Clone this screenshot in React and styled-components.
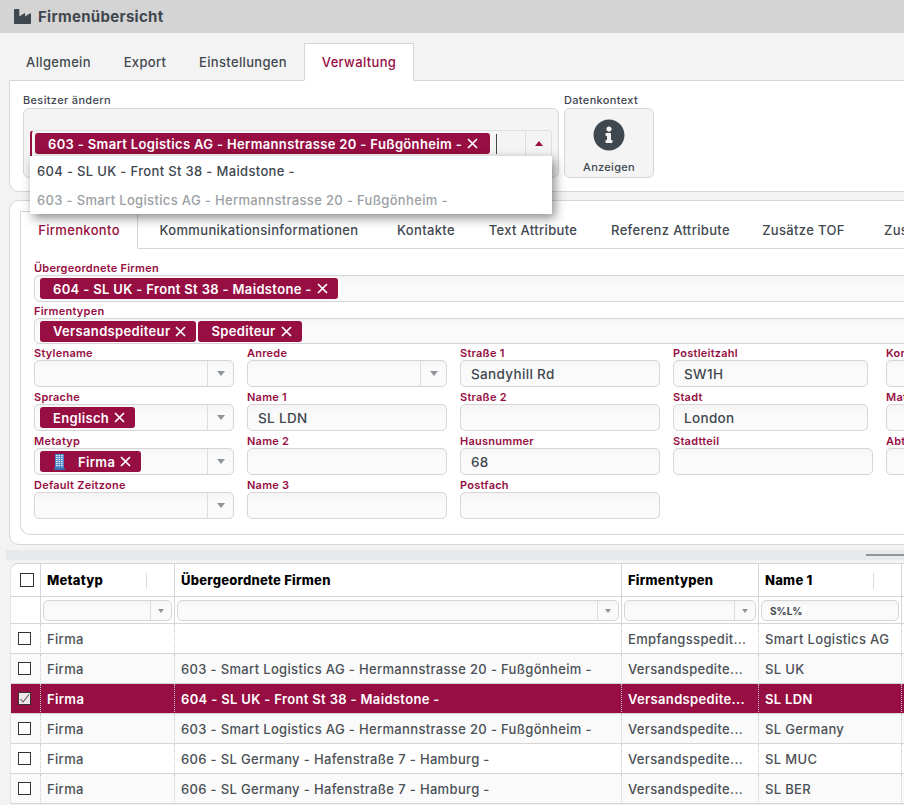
import React from "react";
import styled, { createGlobalStyle } from "styled-components";
import { FaIndustry, FaInfoCircle } from "react-icons/fa";

const CRIMSON = "#970e43";
const INK = "#3f474f";
const LINE = "#d6d6d6";

const Global = createGlobalStyle`
  html, body { margin: 0; padding: 0; background: #f3f3f3; }
  body { width: 904px; height: 805px; overflow: hidden; font-family: Inter, "Noto Sans", sans-serif; font-size: 13px; font-weight: 500; color: ${INK}; letter-spacing: .34px; }
  * { box-sizing: border-box; }
`;

const Page = styled.div`width: 904px; height: 805px; overflow: hidden;`;
const Header = styled.header`
  height: 33px; background: #d4d4d4; display: flex; align-items: center; padding-left: 14px; gap: 7px;
  font-size: 15px; font-weight: 700; letter-spacing: .3px; color: ${INK};
`;
const TabBar = styled.div`
  display: flex; height: ${p => p.$h}px; position: relative; z-index: 1; white-space: nowrap;
`;
const MainTabBar = styled(TabBar)`margin: 10px 0 -1px 9px;`;
const Tab = styled.div`
  width: ${p => p.$w}px; flex: none; display: flex; align-items: center; justify-content: center;
  border: 1px solid ${p => (p.$active ? LINE : "transparent")};
  border-bottom-color: ${p => (p.$active ? "#fff" : "transparent")};
  background: ${p => (p.$active ? "#fff" : "transparent")};
  color: ${p => (p.$active ? CRIMSON : INK)};
`;
const TopPanel = styled.section`
  margin: 0 -20px 0 9px; height: 112px; background: #fff; border: 1px solid ${LINE}; border-radius: 0 0 0 10px;
  padding: 12px 13px; display: flex; gap: 5px;
`;
const FieldColumn = styled.div`display: flex; flex-direction: column;`;
const TopLabel = styled.label`font-size: 11px; line-height: 15px; height: 15px; color: ${INK};`;
const OwnerBox = styled.div`
  width: 536px; height: 70px; background: #f4f4f4; border: 1px solid ${LINE}; border-radius: 6px; padding: 21px 6px; position: relative;
`;
const OwnerSelect = styled.div`
  height: 27px; border: 1px solid #e0e0e0; border-left: 2px solid ${CRIMSON}; border-radius: 4px 4px 0 0; display: flex; align-items: center; padding-left: 3px; background: #f4f4f4;
`;
const Cursor = styled.span`width: 1px; height: 20px; background: ${INK}; margin-left: 6px;`;
const SelectArrow = styled.div`
  margin-left: auto; width: 26px; align-self: stretch; border-left: 1px solid #dcdcdc; display: flex; align-items: center; justify-content: center;
`;
const CaretUp = styled.span`width: 0; height: 0; border: 4.5px solid transparent; border-top: 0; border-bottom: 5px solid ${CRIMSON};`;
const Dropdown = styled.div`
  position: absolute; left: 6px; top: 47px; width: 522px; height: 58px; background: #fff; z-index: 5;
  box-shadow: 3px 4px 10px rgba(0,0,0,.45); padding-top: 1px;
`;
const DropItem = styled.div`height: 29px; line-height: 28px; padding-left: 7px; white-space: nowrap; color: ${p => (p.$muted ? "#9a9fa4" : INK)};`;
const ContextButton = styled.button`
  width: 90px; height: 70px; background: #f4f4f4; border: 1px solid ${LINE}; border-radius: 6px; display: flex; flex-direction: column; align-items: center;
  padding: 10px 0 0; gap: 9px; font: inherit; font-size: 11px; letter-spacing: .3px; color: ${INK};
`;
const CompanyPanel = styled.section`
  margin: 8px -20px 0 9px; height: 345px; background: #fff; border: 1px solid ${LINE}; border-radius: 10px 0 0 10px; padding: 10px 0 0 10px;
`;
const InnerTabBar = styled(TabBar)`margin-bottom: -1px;`;
const InnerPanel = styled.div`
  height: 287px; border: 1px solid ${LINE}; border-right: 0; border-radius: 0 0 0 10px; padding: 12px 0 0 13px;
`;
const FieldLabel = styled.label`
  display: block; font-size: 11px; line-height: 14px; height: 14px; color: ${CRIMSON}; font-weight: 600; letter-spacing: .25px; white-space: nowrap;
`;
const Wide = styled.div`
  width: 900px; height: ${p => p.$h}px; margin-bottom: 2px; border: 1px solid ${LINE}; border-radius: 5px; background: linear-gradient(#f4f4f4, #fafafa 30%);
  display: flex; align-items: center; gap: 2px; padding-left: 5px;
`;
const Columns = styled.div`display: flex; gap: 13px; margin-top: 2px;`;
const Column = styled.div`display: flex; flex-direction: column; width: ${p => p.$w}px; flex: none;`;
const Field = styled.div`height: 44px; width: ${p => p.$w ? p.$w + "px" : "100%"};`;
const InputBox = styled.div`
  height: 27px; border: 1px solid ${LINE}; border-radius: 5px; background: linear-gradient(#f4f4f4, #fafafa 30%);
  display: flex; align-items: center; padding-left: ${p => (p.$tag ? 5 : 10)}px; font-size: 13.5px; overflow: hidden;
`;
const SelectSide = styled.div`
  margin-left: auto; width: 26px; flex: none; align-self: stretch; border-left: 1px solid #dcdcdc; display: flex; align-items: center; justify-content: center;
`;
const CaretDown = styled.span`width: 0; height: 0; border: 4.5px solid transparent; border-bottom: 0; border-top: 5px solid #8e9499;`;
const Tag = styled.span`
  height: 21px; flex: none; background: ${CRIMSON}; color: #fff; border-radius: 3px; display: inline-flex; align-items: center; font-size: 13px; font-weight: 600; letter-spacing: ${p => p.$ls || ".34px"};
  padding: 0 ${p => p.$pr || 10}px 0 13px; gap: 5px; white-space: nowrap; width: ${p => p.$w ? p.$w + "px" : "auto"};
`;
const Splitter = styled.div`margin: 5px 0 0 6px; height: 10px; background: #e8e9ea; position: relative;`;
const SplitHandle = styled.span`position: absolute; right: 0; top: 4px; width: 38px; height: 2px; background: #8f979b;`;
const Table = styled.table`
  margin: 3px 0 0 10px; width: 1000px; table-layout: fixed; border-collapse: separate; border-spacing: 0; background: #fff; border-top: 1px solid ${LINE}; border-radius: 8px 0 0 0;
  border-left: 1px solid #e4e4e4;
`;
const Th = styled.th`
  height: 33px; padding: 0 0 0 6px; border-bottom: 1px solid ${LINE}; border-left: ${p => (p.$first ? "0" : `1px solid ${LINE}`)}; text-align: left; color: #000; font-size: 13px; font-weight: 800; letter-spacing: .25px; position: relative; white-space: nowrap;
`;
const Resizer = styled.span`position: absolute; right: ${p => p.$r}px; top: 9px; height: 16px; width: 1px; background: #dcdcdc;`;
const FilterCell = styled.td`
  height: 27px; padding: 3px 2px 2px; border-bottom: 1px solid ${LINE}; border-left: ${p => (p.$first ? "0" : `1px solid ${LINE}`)};
`;
const FilterBox = styled.div`
  height: 21px; border: 1px solid ${LINE}; border-radius: 5px; background: linear-gradient(#f4f4f4, #fafafa 30%); display: flex; align-items: center; padding-left: 8px;
  font-size: 10px; font-weight: 700; letter-spacing: 0;
`;
const FilterSide = styled.div`
  margin-left: auto; width: 21px; align-self: stretch; border-left: 1px solid #dcdcdc; display: flex; align-items: center; justify-content: center;
`;
const SmallCaret = styled.span`width: 0; height: 0; border: 3.5px solid transparent; border-bottom: 0; border-top: 4px solid #8e9499;`;
const Row = styled.tr`
  background: ${p => (p.$selected ? CRIMSON : p.$alt ? "#fafafa" : "#fff")};
  color: ${p => (p.$selected ? "#fff" : "#4a5056")};
  font-weight: ${p => (p.$selected ? 600 : 500)};
`;
const Td = styled.td`
  height: 30px; padding: 0 0 0 6px; border-bottom: 1px solid ${LINE}; border-left: ${p => (p.$first ? "0" : "1px dotted #c9c9c9")}; white-space: nowrap; overflow: hidden;
`;
const CheckCell = styled(Td)`padding: 0 0 0 7px;`;
const Check = styled.span`
  display: block; width: 13px; height: 13px; border: 1px solid #333; background: ${p => (p.$on ? "#f1e7eb" : "#fff")}; color: #555;
`;
const HeaderCheck = styled(Check)`margin-left: 3px; width: 14px; height: 14px;`;

const CloseX = () => (
  <svg width="11" height="11" viewBox="0 0 11 11" fill="none" stroke="#fff" strokeWidth="1.7" style={{ flex: "none" }}>
    <path d="M1 1 L10 10 M10 1 L1 10" />
  </svg>
);
const Building = () => (
  <svg width="11" height="16" viewBox="0 0 11 16" style={{ flex: "none", marginRight: 8, marginLeft: 1 }}>
    <rect x="1" y="0" width="9" height="14" fill="#4d86c6" />
    <rect x="0" y="14" width="11" height="2" fill="#3a6ea8" />
    {[2, 4.5, 7].map(x => [1, 3, 5, 7, 9, 11].map(y => <rect key={x + "-" + y} x={x} y={y} width="1.6" height="1.2" fill="#dfeaf6" />))}
  </svg>
);

const mainTabs = [["Allgemein", 99], ["Export", 74], ["Einstellungen", 122], ["Verwaltung", 110, true]];
const innerTabs = [["Firmenkonto", 118, true], ["Kommunikationsinformationen", 242], ["Kontakte", 92], ["Text Attribute", 122], ["Referenz Attribute", 153], ["Zusätze TOF", 113], ["Zusätze", 100]];

const Text = ({ label, value, w }) => (
  <Field $w={w}><FieldLabel>{label}</FieldLabel><InputBox>{value}</InputBox></Field>
);
const Pick = ({ label, children }) => (
  <Field><FieldLabel>{label}</FieldLabel><InputBox $tag>{children}<SelectSide><CaretDown /></SelectSide></InputBox></Field>
);

const rows = [
  ["", "Empfangsspedit...", "Smart Logistics AG"],
  ["603 - Smart Logistics AG - Hermannstrasse 20 - Fußgönheim -", "Versandspedite...", "SL UK"],
  ["604 - SL UK - Front St 38 - Maidstone -", "Versandspedite...", "SL LDN", true],
  ["603 - Smart Logistics AG - Hermannstrasse 20 - Fußgönheim -", "Versandspedite...", "SL Germany"],
  ["606 - SL Germany - Hafenstraße 7 - Hamburg -", "Versandspedite...", "SL MUC"],
  ["606 - SL Germany - Hafenstraße 7 - Hamburg -", "Versandspedite...", "SL BER"],
];

export default function App() {
  return (
    <Page>
      <Global />
      <Header><FaIndustry size={17} color={INK} />Firmenübersicht</Header>
      <MainTabBar $h={38}>
        {mainTabs.map(([t, w, a]) => <Tab key={t} $w={w} $active={a}>{t}</Tab>)}
      </MainTabBar>
      <TopPanel>
        <FieldColumn>
          <TopLabel>Besitzer ändern</TopLabel>
          <OwnerBox>
            <OwnerSelect>
              <Tag $w={455}>603 - Smart Logistics AG - Hermannstrasse 20 - Fußgönheim - <CloseX /></Tag>
              <Cursor />
              <SelectArrow><CaretUp /></SelectArrow>
            </OwnerSelect>
            <Dropdown>
              <DropItem>604 - SL UK - Front St 38 - Maidstone -</DropItem>
              <DropItem $muted>603 - Smart Logistics AG - Hermannstrasse 20 - Fußgönheim -</DropItem>
            </Dropdown>
          </OwnerBox>
        </FieldColumn>
        <FieldColumn>
          <TopLabel>Datenkontext</TopLabel>
          <ContextButton><FaInfoCircle size={32} color={INK} />Anzeigen</ContextButton>
        </FieldColumn>
      </TopPanel>
      <CompanyPanel>
        <InnerTabBar $h={38}>
          {innerTabs.map(([t, w, a]) => <Tab key={t + w} $w={w} $active={a}>{t}</Tab>)}
        </InnerTabBar>
        <InnerPanel>
          <FieldLabel>Übergeordnete Firmen</FieldLabel>
          <Wide $h={27}><Tag>604 - SL UK - Front St 38 - Maidstone - <CloseX /></Tag></Wide>
          <FieldLabel>Firmentypen</FieldLabel>
          <Wide $h={26}><Tag>Versandspediteur <CloseX /></Tag><Tag>Spediteur <CloseX /></Tag></Wide>
          <Columns>
            <Column $w={200}>
              <Pick label="Stylename" />
              <Pick label="Sprache"><Tag>Englisch <CloseX /></Tag></Pick>
              <Pick label="Metatyp"><Tag><Building />Firma <CloseX /></Tag></Pick>
              <Pick label="Default Zeitzone" />
            </Column>
            <Column $w={200}>
              <Pick label="Anrede" />
              <Text label="Name 1" value="SL LDN" />
              <Text label="Name 2" />
              <Text label="Name 3" />
            </Column>
            <Column $w={200}>
              <Text label="Straße 1" value="Sandyhill Rd" />
              <Text label="Straße 2" />
              <Text label="Hausnummer" value="68" />
              <Text label="Postfach" />
            </Column>
            <Column $w={200}>
              <Text label="Postleitzahl" value="SW1H" w={195} />
              <Text label="Stadt" value="London" w={195} />
              <Text label="Stadtteil" />
            </Column>
            <Column $w={200}>
              <Text label="Konto" />
              <Text label="Matchcode" />
              <Text label="Abteilung" />
            </Column>
          </Columns>
        </InnerPanel>
      </CompanyPanel>
      <Splitter><SplitHandle /></Splitter>
      <Table>
        <colgroup>
          <col width="29" /><col width="134" /><col width="447" /><col width="137" /><col width="143" /><col width="110" />
        </colgroup>
        <thead>
          <tr>
            <Th $first style={{ paddingLeft: 6 }}><HeaderCheck as="span" /></Th>
            <Th>Metatyp<Resizer $r={27} /></Th>
            <Th>Übergeordnete Firmen</Th>
            <Th>Firmentypen</Th>
            <Th>Name 1<Resizer $r={27} /></Th>
            <Th />
          </tr>
          <tr>
            <FilterCell $first />
            <FilterCell><FilterBox><FilterSide><SmallCaret /></FilterSide></FilterBox></FilterCell>
            <FilterCell><FilterBox><FilterSide><SmallCaret /></FilterSide></FilterBox></FilterCell>
            <FilterCell><FilterBox><FilterSide><SmallCaret /></FilterSide></FilterBox></FilterCell>
            <FilterCell><FilterBox>S%L%</FilterBox></FilterCell>
            <FilterCell><FilterBox /></FilterCell>
          </tr>
        </thead>
        <tbody>
          {rows.map(([parent, type, name, sel], i) => (
            <Row key={i} $selected={sel} $alt={i % 2 === 1}>
              <CheckCell $first>
                <Check $on={sel}>
                  {sel && (
                    <svg width="11" height="11" viewBox="0 0 11 11" fill="none" stroke="#555" strokeWidth="1.1" style={{ display: "block" }}>
                      <path d="M1.5 6 L4 9 L10 1.5" />
                    </svg>
                  )}
                </Check>
              </CheckCell>
              <Td>Firma</Td>
              <Td>{parent}</Td>
              <Td>{type}</Td>
              <Td>{name}</Td>
              <Td />
            </Row>
          ))}
        </tbody>
      </Table>
    </Page>
  );
}
